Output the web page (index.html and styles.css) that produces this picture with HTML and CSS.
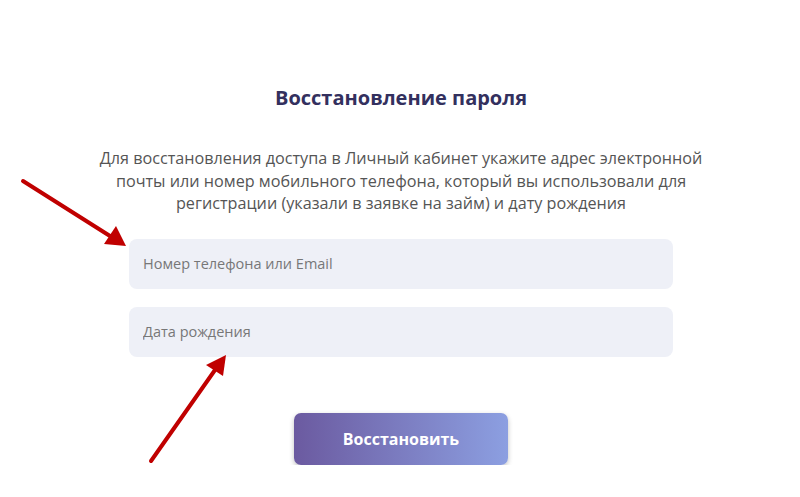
FILE: index.html
```html
<!DOCTYPE html>
<html lang="ru">
<head>
    <meta charset="UTF-8">
    <meta name="viewport" content="width=device-width, initial-scale=1.0">
    <title>Восстановление пароля</title>
    <link rel="stylesheet" href="styles.css">
</head>
<body>
    <div class="recovery">
        <h1 class="recovery-title">Восстановление пароля</h1>
        <p class="recovery-text">Для восстановления доступа в Личный кабинет укажите адрес электронной почты или номер мобильного телефона, который вы использовали для регистрации (указали в заявке на займ) и дату рождения</p>
        <form class="recovery-form">
            <input class="field" type="text" placeholder="Номер телефона или Email">
            <input class="field" type="text" placeholder="Дата рождения">
            <button class="submit" type="button">Восстановить</button>
        </form>
    </div>

    <!-- стрелки-указатели поверх формы -->
    <svg class="arrows" width="800" height="497" viewBox="0 0 800 497">
        <line x1="23" y1="181" x2="110" y2="236" stroke="#c00000" stroke-width="4" stroke-linecap="round"/>
        <polygon points="126,246 104,244 116,226" fill="#c00000"/>
        <line x1="151" y1="461" x2="215" y2="370" stroke="#c00000" stroke-width="4" stroke-linecap="round"/>
        <polygon points="226,355 223,376 206,365" fill="#c00000"/>
    </svg>
</body>
</html>
```

FILE: styles.css
```css
body {
    margin: 0;
    background: #fff;
    font-family: 'Open Sans', 'Liberation Sans', sans-serif;
    color: #555;
}

.recovery {
    display: flex;
    flex-direction: column;
    align-items: center;
    padding: 85px 0 0 2px;
}

.recovery-title {
    margin: 0;
    font-size: 20px;
    line-height: 26px;
    font-weight: 700;
    color: #33305e;
}

.recovery-text {
    width: 640px;
    margin: 36px 0 0;
    font-size: 16.2px;
    line-height: 22.5px;
    text-align: center;
    color: #555;
}

.recovery-form {
    width: 544px;
    margin-top: 24px;
    display: flex;
    flex-direction: column;
    align-items: center;
    gap: 18px;
}

.field {
    box-sizing: border-box;
    width: 100%;
    height: 50px;
    padding: 0 14px;
    border: none;
    border-radius: 8px;
    background: #eef0f7;
    font-family: inherit;
    font-size: 14.5px;
    color: #333;
    outline: none;
}

.field::placeholder {
    color: #777;
}

.submit {
    width: 214px;
    height: 52px;
    margin-top: 38px;
    border: none;
    border-radius: 7px;
    background: linear-gradient(90deg, #6b5aa0, #8c9fe1);
    color: #fff;
    font-family: inherit;
    font-size: 16px;
    font-weight: 700;
    box-shadow: 0 2px 5px rgba(0, 0, 0, 0.25);
    cursor: pointer;
}

.arrows {
    position: absolute;
    top: 0;
    left: 0;
    pointer-events: none;
}
```
